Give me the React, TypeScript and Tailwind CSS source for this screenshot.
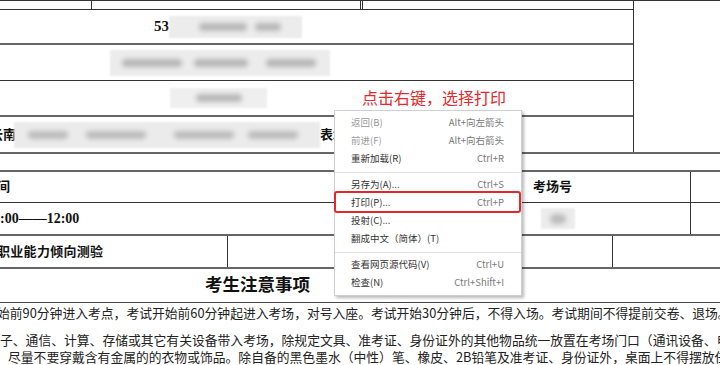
import React from "react";

const cjk = "font-['Noto_Sans_CJK_SC',sans-serif]";
const serif = "font-['Liberation_Serif','Noto_Sans_CJK_SC',serif] font-bold text-[#111]";

type MenuItem = { label: string; keys?: string; disabled?: boolean } | "sep";

const menuItems: MenuItem[] = [
  { label: "返回(B)", keys: "Alt+向左箭头", disabled: true },
  { label: "前进(F)", keys: "Alt+向右箭头", disabled: true },
  { label: "重新加载(R)", keys: "Ctrl+R" },
  "sep",
  { label: "另存为(A)...", keys: "Ctrl+S" },
  { label: "打印(P)...", keys: "Ctrl+P" },
  { label: "投射(C)..." },
  { label: "翻成中文（简体）(T)" },
  "sep",
  { label: "查看网页源代码(V)", keys: "Ctrl+U" },
  { label: "检查(N)", keys: "Ctrl+Shift+I" },
];

function ContextMenu() {
  return (
    <div
      className={`absolute left-[334px] top-[110px] w-[188px] border border-[#cfcfcf] bg-white pt-[3px] pb-[3px] shadow-[2px_2px_3px_rgba(0,0,0,0.28)] ${cjk}`}
    >
      {menuItems.map((item, i) =>
        item === "sep" ? (
          <div key={i} className="flex h-[8px] items-center">
            <div className="h-px w-full bg-[#e3e3e3]" />
          </div>
        ) : (
          <div
            key={i}
            className="flex h-[18px] items-center justify-between pl-[16px] pr-[17px] text-[9.5px] leading-none"
          >
            <span className={item.disabled ? "text-[#9a9a9a]" : "text-[#333]"}>
              {item.label}
            </span>
            {item.keys && <span className="text-[#7a7a7a]">{item.keys}</span>}
          </div>
        )
      )}
    </div>
  );
}

export default function App() {
  return (
    <div className="relative h-[365px] w-[720px] overflow-hidden bg-white text-[#111]">
      {/* 上半部分表格 */}
      <div className="border-t border-[#333]">
        <div className="w-[634px] border-r border-[#333]">
          <div className="flex h-[9px] border-b border-[#333]">
            <div className="w-[92px] border-r border-[#333]" />
            <div className="w-[269px] border-r border-[#333]" />
            <div className="w-[2px] border-r border-[#333]" />
            <div className="flex-1" />
          </div>

          <div className="flex h-[35px] items-center border-b-2 border-[#666] pl-[154px]">
            <span className={`text-[15px] ${serif}`}>53</span>
            <div className="flex h-[22px] w-[133px] items-center gap-[8px] bg-[#ececec] pl-[30px] blur-[1px]">
              <span className="h-[8px] w-[48px] rounded-full bg-[#b8b8b8] blur-[2px]" />
              <span className="h-[8px] w-[26px] rounded-full bg-[#b8b8b8] blur-[2px]" />
            </div>
          </div>

          <div className="flex h-[36px] items-center border-b border-[#333] pl-[110px]">
            <div className="flex h-[26px] w-[220px] items-center bg-[#ececec] pl-[12px] blur-[1px]">
              <span className="h-[8px] w-[60px] rounded-full bg-[#b6b6b6] blur-[2px]" />
              <span className="ml-[12px] h-[8px] w-[54px] rounded-full bg-[#b6b6b6] blur-[2px]" />
              <span className="ml-[18px] h-[8px] w-[50px] rounded-full bg-[#b6b6b6] blur-[2px]" />
            </div>
          </div>

          <div className="flex h-[36px] items-center border-b-2 border-[#666] pl-[170px]">
            <div className="flex h-[20px] w-[97px] items-center bg-[#efefef] pl-[26px] blur-[1px]">
              <span className="h-[8px] w-[46px] rounded-full bg-[#b8b8b8] blur-[2px]" />
            </div>
          </div>

          <div className="flex h-[35px] items-center overflow-hidden">
            <span className={`ml-[-10px] shrink-0 text-[13px] ${serif}`}>云南</span>
            <div className="ml-[-2px] flex h-[26px] w-[306px] shrink-0 items-center bg-[#ebebeb] pl-[14px] blur-[1px]">
              <span className="h-[8px] w-[40px] rounded-full bg-[#bcbcbc] blur-[2px]" />
              <span className="ml-[18px] h-[8px] w-[60px] rounded-full bg-[#bcbcbc] blur-[2px]" />
              <span className="ml-[28px] h-[8px] w-[60px] rounded-full bg-[#bcbcbc] blur-[2px]" />
              <span className="ml-[14px] h-[8px] w-[50px] rounded-full bg-[#bcbcbc] blur-[2px]" />
            </div>
            <span className={`shrink-0 text-[13px] ${serif}`}>表城</span>
          </div>
        </div>
      </div>

      {/* 下半部分表格 */}
      <div className="h-[18px] border-t-2 border-[#666]" />

      <div className={`flex h-[32px] items-center border-t-2 border-[#666] text-[13px] ${serif}`}>
        <div className="w-[522px]">
          <span className="ml-[-3px] block">间</span>
        </div>
        <div className="flex h-full w-[169px] items-center border-r border-[#333] pl-[11px]">
          考场号
        </div>
        <div className="flex-1" />
      </div>

      <div className={`flex h-[32px] items-center border-t border-[#333] ${serif}`}>
        <div className="w-[522px] text-[14px]">:00——12:00</div>
        <div className="flex h-full w-[169px] items-center border-r border-[#333] pl-[19px]">
          <div className="flex h-[21px] w-[34px] items-center justify-center bg-[#ececec] blur-[1px]">
            <span className="h-[10px] w-[16px] rounded-full bg-[#bcbcbc] blur-[2px]" />
          </div>
        </div>
        <div className="flex-1" />
      </div>

      <div className={`flex h-[33px] items-center border-t-2 border-[#666] text-[13px] ${serif}`}>
        <div className="flex h-full w-[228px] items-center overflow-hidden border-r border-[#333]">
          <span className="ml-[-3px] tracking-[0.3px]">职业能力倾向测验</span>
        </div>
        <div className="h-full w-[385px] border-r border-[#333]" />
        <div className="flex-1" />
      </div>

      <div className="flex h-[35px] items-center border-t-2 border-[#666] pl-[205px]">
        <span className={`text-[17.5px] ${serif}`}>考生注意事项</span>
      </div>

      <div
        className={`border-t border-b-2 border-[#444] pt-[1px] text-[12.8px] leading-[17px] text-[#222] whitespace-nowrap ${cjk}`}
      >
        <p className="ml-[-3px]">
          始前90分钟进入考点，考试开始前60分钟起进入考场，对号入座。考试开始30分钟后，不得入场。考试期间不得提前交卷、退场。考试结束
        </p>
        <p className="mt-[10px]">
          子、通信、计算、存储或其它有关设备带入考场，除规定文具、准考证、身份证外的其他物品统一放置在考场门口（通讯设备、电
        </p>
        <p className="pl-[8px]">
          尽量不要穿戴含有金属的的衣物或饰品。除自备的黑色墨水（中性）笔、橡皮、2B铅笔及准考证、身份证外，桌面上不得摆放任何
        </p>
      </div>

      {/* 提示文字 */}
      <div className={`absolute left-[362px] top-[86px] text-[16px] leading-[22px] text-[#e8262b] ${cjk}`}>
        点击右键，选择打印
      </div>

      <ContextMenu />

      {/* 打印 高亮框 */}
      <div className="absolute left-[334px] top-[191px] h-[22px] w-[187px] rounded-[3px] border-2 border-[#e5262a]" />
    </div>
  );
}
